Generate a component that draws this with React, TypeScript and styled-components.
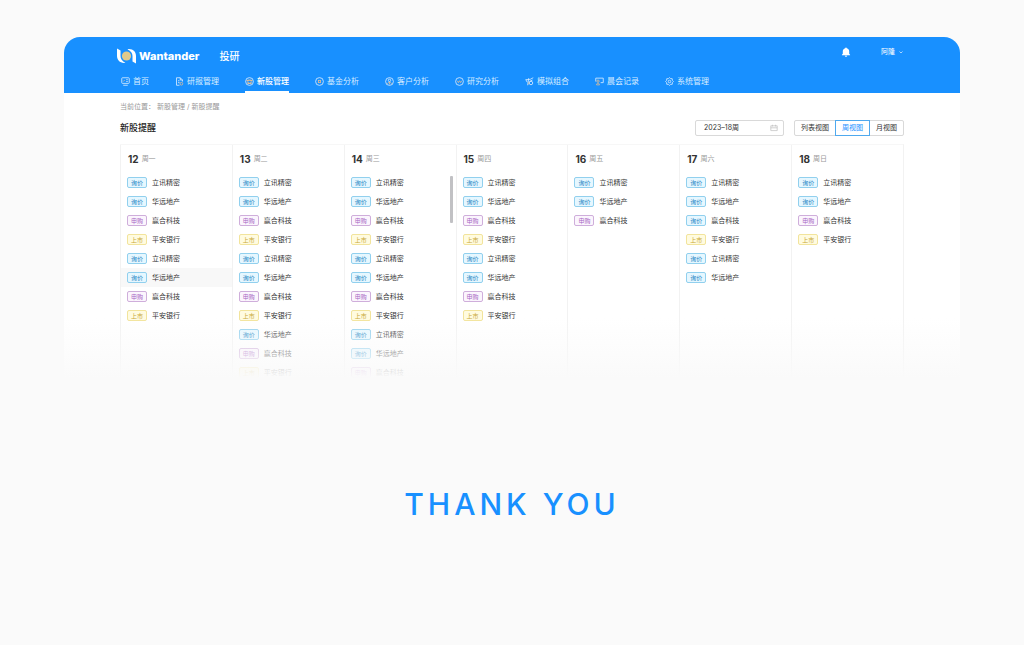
import React from "react";
import styled, { createGlobalStyle } from "styled-components";

const GlobalStyle = createGlobalStyle`
  * { box-sizing: border-box; }
  body {
    margin: 0;
    background: #fafafa;
    color: #333;
    font-family: Inter, "Noto Sans CJK SC", sans-serif;
    font-size: 7px;
    line-height: 12px;
  }
  button, input { font: inherit; color: inherit; }
  ul { list-style: none; margin: 0; padding: 0; }
  a { color: inherit; text-decoration: none; }
`;

const Page = styled.main`
  min-height: 100vh;
  padding: 37px 64px 0;
`;

const Card = styled.section`
  position: relative;
  background: #fff;
  border-radius: 16px 16px 0 0;
`;

const Header = styled.header`
  background: #1890ff;
  color: #fff;
  border-radius: 16px 16px 0 0;
  padding: 10px 56px 0 53px;
`;

const TopBar = styled.div`
  display: flex;
  align-items: center;
  height: 18px;
`;

const Brand = styled.a`
  display: flex;
  align-items: center;
  gap: 3px;
  font-size: 11px;
  font-weight: 800;
`;

const Product = styled.span`
  margin-left: 20px;
  font-size: 10px;
  font-weight: 500;
`;

const Account = styled.div`
  display: flex;
  align-items: center;
  gap: 30px;
  margin: 0 1px 8px auto;
`;

const PlainButton = styled.button`
  display: flex;
  align-items: center;
  gap: 4px;
  padding: 0;
  border: 0;
  background: none;
`;

const Nav = styled.nav`
  display: flex;
  gap: 26px;
  padding: 6px 0 0 4px;
`;

const NavLink = styled.a<{ $active?: boolean }>`
  display: flex;
  align-items: center;
  gap: 3px;
  height: 22px;
  font-size: 8px;
  color: ${(p) => (p.$active ? "#fff" : "#d9edff")};
  font-weight: ${(p) => (p.$active ? 500 : 400)};
  border-bottom: 2px solid ${(p) => (p.$active ? "#fff" : "transparent")};
`;

const Content = styled.div`
  padding: 8px 56px 0;
`;

const Crumbs = styled.nav`
  display: flex;
  gap: 2px;
  color: #999;
`;

const TitleBar = styled.div`
  display: flex;
  align-items: center;
  gap: 10px;
  margin: 7px 0 8px;
`;

const Title = styled.h1`
  flex: 1;
  margin: 0;
  font-size: 9px;
  font-weight: 500;
  color: #222;
`;

const DateField = styled.label`
  display: flex;
  align-items: center;
  justify-content: space-between;
  width: 89px;
  height: 16px;
  padding: 0 5px 0 8px;
  border: 1px solid #d9d9d9;
  border-radius: 2px;
`;

const DateInput = styled.input`
  width: 56px;
  height: 12px;
  padding: 0;
  border: 0;
  outline: 0;
  background: none;
`;

const Views = styled.div`
  display: flex;
`;

const ViewButton = styled.button<{ $active?: boolean }>`
  height: 16px;
  padding: 0 6px;
  background: #fff;
  border: 1px solid ${(p) => (p.$active ? "#4fa9ee" : "#d9d9d9")};
  color: ${(p) => (p.$active ? "#1890ff" : "#333")};
  position: relative;
  z-index: ${(p) => (p.$active ? 1 : 0)};
  & + & { margin-left: -1px; }
  &:first-child { border-radius: 2px 0 0 2px; }
  &:last-child { border-radius: 0 2px 2px 0; }
`;

const Week = styled.div`
  display: grid;
  grid-template-columns: repeat(7, 1fr);
  border-top: 1px solid #f7f7f7;
  border-right: 1px solid #f2f2f2;
`;

const Day = styled.section`
  position: relative;
  border-left: 1px solid #f2f2f2;
`;

const DayHead = styled.h2`
  display: flex;
  align-items: center;
  gap: 3px;
  height: 28px;
  margin: 0;
  padding-left: 7px;
  font-size: 10px;
  font-weight: 700;
`;

const WeekDay = styled.span`
  font-size: 7px;
  font-weight: 400;
  color: #999;
`;

const Item = styled.li<{ $hover?: boolean }>`
  display: flex;
  align-items: center;
  gap: 5px;
  height: 19px;
  padding-left: 6px;
  background: ${(p) => (p.$hover ? "#f8f8f8" : "none")};
`;

type Kind = "询价" | "申购" | "上市";

const tones: Record<Kind, [string, string, string]> = {
  询价: ["#1f86c4", "#e6f7ff", "#91d0ee"],
  申购: ["#a765c4", "#fbf5fd", "#cfaedb"],
  上市: ["#c9a83a", "#fffbe0", "#f2e49c"],
};

const Tag = styled.span<{ $kind: Kind }>`
  width: 20px;
  height: 11px;
  border: 1px solid ${(p) => tones[p.$kind][2]};
  border-radius: 2px;
  background: ${(p) => tones[p.$kind][1]};
  color: ${(p) => tones[p.$kind][0]};
  font-size: 6px;
  line-height: 9px;
  text-align: center;
`;

const ScrollThumb = styled.span`
  position: absolute;
  top: 31px;
  right: 3px;
  width: 3px;
  height: 47px;
  border-radius: 1px;
  background: #c1c1c4;
`;

const Fade = styled.div`
  position: absolute;
  left: -20px;
  right: -20px;
  bottom: 0;
  height: 64px;
  background: linear-gradient(rgba(250, 250, 250, 0), #fafafa 94%);
  pointer-events: none;
`;

const Thanks = styled.p`
  margin: 102px 0 0;
  text-align: center;
  color: #1890ff;
  font-size: 30px;
  line-height: 40px;
  font-weight: 500;
  letter-spacing: 4px;
`;

const Logo = () => (
  <svg width="19" height="16" viewBox="0 0 19 16" aria-hidden="true">
    <path d="M0 .5 3.500 2.500v5.500c0 3 1.600 5 5 6.800C3 15.500 0 12 0 8Z" fill="#fff" />
    <path d="M19 15.500 15.500 13.500V8c0-3-1.600-5-5-6.800C16 .5 19 4 19 8Z" fill="#fff" />
    <circle cx="9.500" cy="8" r="4.600" fill="#dfca8b" />
  </svg>
);

const TAN = "#e0bd96";

const glyphs: Record<string, React.ReactNode> = {
  home: (
    <>
      <rect x="1" y="1" width="10" height="7.500" rx="1" />
      <path d="M3 11h6M7 3.500h2M7 6h2" />
      <path d="M3 6l2-2" stroke={TAN} />
    </>
  ),
  report: (
    <>
      <path d="M7 1H2v10h4M7 1l3 3v2M7 1v3h3M4 5h2M4 7.500h2" />
      <circle cx="8.500" cy="9" r="1.800" stroke={TAN} />
    </>
  ),
  stock: (
    <>
      <circle cx="6" cy="6" r="5.200" />
      <path d="M2 5.500c2-1.800 6-1.800 8 0M4 6v2.500h4V6" stroke={TAN} strokeWidth="1.500" />
    </>
  ),
  fund: (
    <>
      <circle cx="6" cy="6" r="5.200" />
      <rect x="4.500" y="4.500" width="3" height="3" stroke={TAN} />
    </>
  ),
  client: (
    <>
      <circle cx="6" cy="6" r="5.200" />
      <circle cx="6" cy="4.500" r="1.600" />
      <path d="M3 9.500c0-3 6-3 6 0M6 7v3" stroke={TAN} />
    </>
  ),
  research: (
    <>
      <circle cx="6" cy="6" r="5.200" />
      <path d="M3 5l1.500 2.500L6 5l1.500 2.500L9 5" stroke={TAN} />
    </>
  ),
  combo: (
    <>
      <path d="M1 3.500h6M1 3.500l2 3.500M5 1.500 3.500 11M7 3l4-2M6 6l4-2" />
      <circle cx="8" cy="8" r="2.300" />
      <path d="M5 7v3" stroke={TAN} />
    </>
  ),
  meeting: (
    <>
      <path d="M1 6V1.500h10v6H7.500" />
      <circle cx="4" cy="5.500" r="1.500" stroke={TAN} />
      <path d="M2 10.500c0-3 4-3 4 0z" stroke={TAN} />
    </>
  ),
  system: (
    <>
      <path d="M6 .8 7.500 2.200l2.200.1.100 2.200L11.200 6 9.800 7.500l-.1 2.200-2.200.1L6 11.200 4.500 9.800l-2.200-.1-.1-2.200L.8 6l1.400-1.500.1-2.200 2.200-.1Z" />
      <circle cx="6" cy="6" r="1.700" />
    </>
  ),
};

const NavIcon = ({ name }: { name: string }) => (
  <svg width="9" height="9" viewBox="0 0 12 12" fill="none" stroke="#d9edff" strokeWidth="1.100" aria-hidden="true">
    {glyphs[name]}
  </svg>
);

const navItems: [string, string][] = [
  ["home", "首页"],
  ["report", "研报管理"],
  ["stock", "新股管理"],
  ["fund", "基金分析"],
  ["client", "客户分析"],
  ["research", "研究分析"],
  ["combo", "模拟组合"],
  ["meeting", "晨会记录"],
  ["system", "系统管理"],
];

type Entry = [Kind, string];
const lixun: Entry = ["询价", "立讯精密"];
const huayuan: Entry = ["询价", "华远地产"];
const yinghe: Entry = ["申购", "赢合科技"];
const pingan: Entry = ["上市", "平安银行"];
const four = [lixun, huayuan, yinghe, pingan];
const eight = [...four, ...four];

const days: { date: number; name: string; entries: Entry[]; hover?: number; scroll?: boolean }[] = [
  { date: 12, name: "周一", entries: eight, hover: 5 },
  { date: 13, name: "周二", entries: [...eight, huayuan, yinghe, pingan] },
  { date: 14, name: "周三", entries: [...eight, lixun, huayuan, yinghe], scroll: true },
  { date: 15, name: "周四", entries: eight },
  { date: 16, name: "周五", entries: [lixun, huayuan, yinghe] },
  { date: 17, name: "周六", entries: [lixun, huayuan, ["询价", "赢合科技"], pingan, lixun, huayuan] },
  { date: 18, name: "周日", entries: four },
];

export default function App() {
  return (
    <Page>
      <GlobalStyle />
      <Card>
        <Header>
          <TopBar>
            <Brand href="#">
              <Logo />
              Wantander
            </Brand>
            <Product>投研</Product>
            <Account>
              <PlainButton aria-label="通知">
                <svg width="10" height="10" viewBox="0 0 10 10" fill="#fff" aria-hidden="true">
                  <path d="M5 .5c.5 0 .8.300.8.700C7.400 1.600 8.200 2.800 8.200 4.300v2.400l.9 1v.5H.9v-.5l.9-1V4.300c0-1.500.8-2.700 2.400-3.100 0-.4.300-.7.800-.7ZM3.800 8.700h2.400c-.1.600-.6 1-1.200 1s-1.100-.4-1.200-1Z" />
                </svg>
              </PlainButton>
              <PlainButton>
                阿隆
                <svg width="4" height="3" viewBox="0 0 4 3" fill="none" stroke="#cfe6ff" strokeWidth=".8" aria-hidden="true">
                  <path d="m.5.5 1.500 1.500L3.500.5" />
                </svg>
              </PlainButton>
            </Account>
          </TopBar>
          <Nav>
            {navItems.map(([icon, label]) => (
              <NavLink key={icon} href="#" $active={icon === "stock"}>
                <NavIcon name={icon} />
                {label}
              </NavLink>
            ))}
          </Nav>
        </Header>
        <Content>
          <Crumbs>
            <span>当前位置：</span>
            <span>新股管理 / 新股提醒</span>
          </Crumbs>
          <TitleBar>
            <Title>新股提醒</Title>
            <DateField>
              <DateInput aria-label="周" defaultValue="2023–18周" />
              <svg width="8" height="8" viewBox="0 0 8 8" fill="none" stroke="#c4c4c4" strokeWidth=".8" aria-hidden="true">
                <path d="M.8 1.800h6.400v4.800H.8ZM.8 3.800h6.400M2.500.8v1.600M5.500.8v1.600" />
              </svg>
            </DateField>
            <Views>
              <ViewButton>列表视图</ViewButton>
              <ViewButton $active>周视图</ViewButton>
              <ViewButton>月视图</ViewButton>
            </Views>
          </TitleBar>
          <Week>
            {days.map((day) => (
              <Day key={day.date}>
                <DayHead>
                  {day.date}
                  <WeekDay>{day.name}</WeekDay>
                </DayHead>
                <ul>
                  {day.entries.map(([kind, name], i) => (
                    <Item key={i} $hover={day.hover === i}>
                      <Tag $kind={kind}>{kind}</Tag>
                      {name}
                    </Item>
                  ))}
                </ul>
                {day.scroll && <ScrollThumb />}
              </Day>
            ))}
          </Week>
        </Content>
        <Fade />
      </Card>
      <Thanks>THANK YOU</Thanks>
    </Page>
  );
}
